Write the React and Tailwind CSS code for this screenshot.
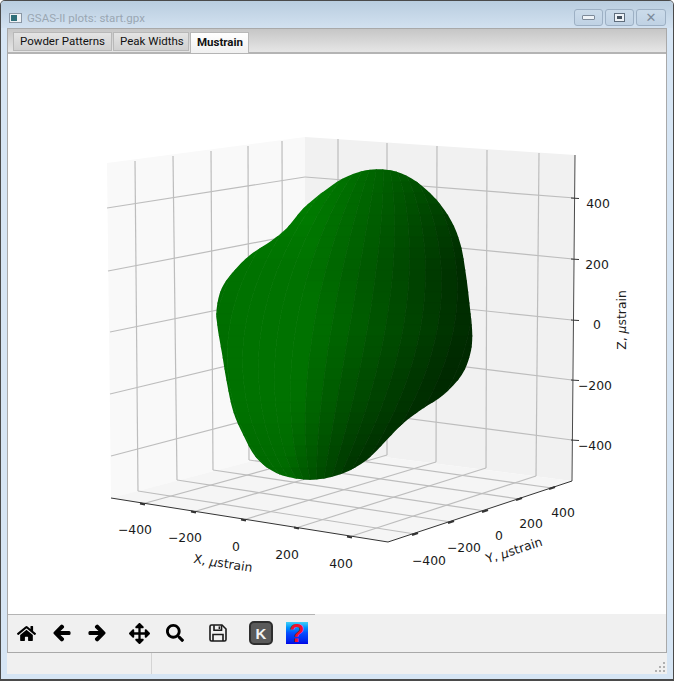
import { FaHome, FaArrowLeft, FaArrowRight, FaArrowsAlt, FaSearch } from "react-icons/fa";

const outline = [
  [500, 13], [560, 20], [620, 50], [680, 105], [725, 170], [752, 240], [768, 330], [780, 430], [787, 510],
  [780, 570], [755, 630], [700, 690], [640, 730], [580, 775], [530, 825], [470, 885], [400, 925], [330, 942],
  [270, 942], [200, 925], [140, 880], [100, 810], [70, 740], [50, 650], [35, 560], [22, 480], [20, 430],
  [35, 370], [70, 320], [120, 270], [180, 230], [230, 190], [280, 130], [340, 80], [400, 40], [450, 20],
].map(([x, y]) => [+(210 + x / 3).toFixed(1), +(165 + y / 3).toFixed(1)]);

// closed catmull-rom through the outline points
function blobPath(pts) {
  const n = pts.length;
  let d = `M${pts[0][0]} ${pts[0][1]}`;
  for (let i = 0; i < n; i++) {
    const p0 = pts[(i - 1 + n) % n];
    const p1 = pts[i];
    const p2 = pts[(i + 1) % n];
    const p3 = pts[(i + 2) % n];
    const c1x = p1[0] + (p2[0] - p0[0]) / 6;
    const c1y = p1[1] + (p2[1] - p0[1]) / 6;
    const c2x = p2[0] - (p3[0] - p1[0]) / 6;
    const c2y = p2[1] - (p3[1] - p1[1]) / 6;
    d += `C${c1x.toFixed(1)} ${c1y.toFixed(1)} ${c2x.toFixed(1)} ${c2y.toFixed(1)} ${p2[0]} ${p2[1]}`;
  }
  return d + "Z";
}

// longitude/latitude mesh that gets clipped by the outline
function meshPoint(col, row, cols, rows) {
  const t = row / rows;
  const theta = (col / cols - 0.5) * Math.PI;
  const cx = 378 + (322 - 378) * t;
  const w = 40 + 190 * Math.pow(Math.sin(Math.PI * t), 0.6);
  return [cx + Math.sin(theta) * w, 160 + 330 * t];
}

function shade(x, y) {
  const lowerRight = Math.min(1, Math.max(0, (x - 260) / 90));
  const s = x + 0.55 * Math.max(0, y - 330) * lowerRight;
  let g = 114 - Math.max(0, s - 310) * 0.45;
  g += Math.max(0, 270 - y) * 0.16;
  g -= Math.max(0, y - 400) * 0.12;
  g -= Math.max(0, 240 - x) * 0.2;
  return Math.max(42, Math.round(g));
}

function buildMesh() {
  const cols = 40;
  const rows = 30;
  const cells = [];
  for (let c = 0; c < cols; c++) {
    for (let r = 0; r < rows; r++) {
      const a = meshPoint(c, r, cols, rows);
      const b = meshPoint(c + 1, r, cols, rows);
      const e = meshPoint(c + 1, r + 1, cols, rows);
      const f = meshPoint(c, r + 1, cols, rows);
      const mx = (a[0] + b[0] + e[0] + f[0]) / 4;
      const my = (a[1] + b[1] + e[1] + f[1]) / 4;
      cells.push({
        key: `${c}-${r}`,
        points: [a, b, e, f].map((p) => p.map((v) => v.toFixed(1)).join(",")).join(" "),
        color: `rgb(0,${shade(mx, my)},0)`,
      });
    }
  }
  return cells;
}

const meshCells = buildMesh();

const leftV = [[135, 161, 138, 491], [173, 156, 177, 480], [211, 151, 213, 470], [248, 146, 249, 460], [282, 141, 283, 450]];
const rightV = [[338, 139, 338, 450], [387, 143, 387, 455], [437, 146, 436, 462], [487, 150, 486, 468], [539, 153, 536, 476]];
const leftH = [[107, 208, 305, 177], [108, 271, 305, 233], [110, 332, 305, 292], [110, 394, 305, 347], [111, 456, 305, 405]];
const rightH = [[305, 177, 575, 198], [305, 233, 573, 259], [305, 292, 572, 320], [305, 347, 572, 380], [305, 405, 572, 440]];
const floorX = [[142, 504, 338, 450], [193, 512, 387, 455], [243, 520, 436, 462], [296, 528, 486, 468], [349, 537, 536, 476]];
const floorY = [[415, 534, 138, 491], [451, 522, 177, 480], [485, 511, 213, 470], [519, 499, 249, 460], [552, 488, 283, 450]];
const zTicks = [[198, "400", 598, 203], [259, "200", 597, 264], [320, "0", 597, 324], [380, "−200", 595, 385], [440, "−400", 595, 445]];
const xLabels = [["−400", 135, 529], ["−200", 185, 537], ["0", 236, 546], ["200", 287, 554], ["400", 341, 563]];
const yLabels = [["−400", 429, 560], ["−200", 464, 547], ["0", 499, 535], ["200", 531, 523], ["400", 563, 512]];

function Lines({ data }) {
  return data.map((l, i) => (
    <line key={i} x1={l[0]} y1={l[1]} x2={l[2]} y2={l[3]} stroke="#bdbdbd" strokeWidth="1.2" />
  ));
}

function AxisLabel({ x, y, rotate, children }) {
  return (
    <text x={x} y={y} textAnchor="middle" dominantBaseline="central" fontSize="12.4" fill="#1a1a1a" transform={`rotate(${rotate} ${x} ${y})`}>
      {children}
    </text>
  );
}

function Plot() {
  return (
    <svg viewBox="8 54 658 560" className="w-[658px] h-[560px] block font-['DejaVu_Sans',sans-serif]">
      <rect x="8" y="54" width="658" height="560" fill="#ffffff" />
      <polygon points="107,163 305,137 305,447 111,498" fill="#f9f9f9" />
      <polygon points="305,137 575,155 572,481 305,447" fill="#f1f1f1" />
      <polygon points="111,498 305,447 572,481 388,542" fill="#f5f5f5" />
      <Lines data={leftV} />
      <Lines data={rightV} />
      <Lines data={leftH} />
      <Lines data={rightH} />
      <Lines data={floorX} />
      <Lines data={floorY} />

      <line x1="575" y1="155" x2="572" y2="481" stroke="#4a4a4a" strokeWidth="1" />
      <line x1="111" y1="498" x2="388" y2="542" stroke="#333333" strokeWidth="1" />
      <line x1="388" y1="542" x2="572" y2="481" stroke="#333333" strokeWidth="1" />
      {zTicks.map(([y, label, tx, ty]) => (
        <g key={label}>
          <line x1="571" y1={y} x2="579" y2={y + 0.5} stroke="#333333" strokeWidth="1" />
          <AxisLabel x={tx} y={ty} rotate={0}>{label}</AxisLabel>
        </g>
      ))}
      {floorX.map((l, i) => (
        <line key={i} x1={l[0] - 2} y1={l[1] - 0.4} x2={l[0] + 3} y2={l[1] + 0.5} stroke="#333333" strokeWidth="2" />
      ))}
      {floorY.map((l, i) => (
        <line key={i} x1={l[0] - 3} y1={l[1] + 1} x2={l[0] + 3} y2={l[1] - 1} stroke="#333333" strokeWidth="2" />
      ))}
      {xLabels.map(([t, x, y]) => <AxisLabel key={t} x={x} y={y} rotate={0}>{t}</AxisLabel>)}
      {yLabels.map(([t, x, y]) => <AxisLabel key={t} x={x} y={y} rotate={0}>{t}</AxisLabel>)}
      <AxisLabel x={223} y={563} rotate={9}>X, <tspan fontStyle="italic">μ</tspan>strain</AxisLabel>
      <AxisLabel x={514} y={550} rotate={-18}>Y, <tspan fontStyle="italic">μ</tspan>strain</AxisLabel>
      <AxisLabel x={621} y={320} rotate={-90}>Z, <tspan fontStyle="italic">μ</tspan>strain</AxisLabel>

      <clipPath id="blob">
        <path d={blobPath(outline)} />
      </clipPath>
      <g clipPath="url(#blob)">
        {meshCells.map((c) => (
          <polygon key={c.key} points={c.points} fill={c.color} stroke={c.color} strokeWidth="0.7" />
        ))}
      </g>
    </svg>
  );
}

function WinButton({ children, className }) {
  return (
    <div className={`h-[17px] flex items-center justify-center rounded-[3px] border border-[#9db0c4] bg-gradient-to-b from-[#cbdbea] to-[#c0d2e4] ${className}`}>
      {children}
    </div>
  );
}

function SaveIcon() {
  return (
    <svg viewBox="0 0 18 18" className="ml-[25px] w-[18px] h-[18px]" fill="none" stroke="#1a1a1a" strokeWidth="1.6">
      <path d="M2.5 1h10.5l4 4v10.5a1.5 1.5 0 0 1-1.5 1.5h-13a1.5 1.5 0 0 1-1.5-1.5v-13a1.5 1.5 0 0 1 1.5-1.5z" />
      <path d="M5 1.2v5h7.5v-5" />
      <path d="M4 17v-6.5h10v6.5" />
      <rect x="9.6" y="2.4" width="1.4" height="2.6" fill="#1a1a1a" stroke="none" />
    </svg>
  );
}

function KeyIcon() {
  return (
    <div className="w-6 h-6 rounded-[5px] bg-[#5a5a5a] border-2 border-[#2e2e2e] flex items-center justify-center">
      <span className="text-[#f2f2f2] text-[15px] font-bold leading-none font-['Liberation_Sans',sans-serif]">K</span>
    </div>
  );
}

function HelpIcon() {
  return (
    <div className="w-[22px] h-[22px] bg-gradient-to-b from-[#3fd0f5] via-[#0a4cff] to-[#0000e6] flex items-center justify-center">
      <span className="text-[#f0102a] text-[25px] font-bold leading-none font-['Liberation_Sans',sans-serif]">?</span>
    </div>
  );
}

export default function App() {
  return (
    <div className="w-[674px] h-[681px] flex flex-col overflow-hidden border-t border-x border-[#4a4a4a] border-b-2 rounded-t-[5px] bg-[#d6e5f4] font-['Roboto',sans-serif]">
      {/* title bar */}
      <div className="h-[27px] shrink-0 flex items-start bg-gradient-to-b from-[#b9cddf] to-[#d2e1f0] pl-[8px] pr-[7px]">
        <div className="mt-[12px] w-[13px] h-[10px] border border-[#8a97a5] bg-[#eef2f5] flex items-start p-[1px]">
          <div className="w-[6px] h-[6px] bg-[#2f6f7a]" />
        </div>
        <span className="ml-[5px] mt-[9px] text-[11.5px] leading-[16px] text-[#9aa7b3]">GSAS-II plots: start.gpx</span>
        <div className="ml-auto mt-[8px] flex gap-[2px]">
          <WinButton className="w-[29px]"><div className="w-[13px] h-[5px] rounded-[1px] bg-[#eef3f8] border border-[#7d8a99]" /></WinButton>
          <WinButton className="w-[29px]"><div className="w-[11px] h-[9px] bg-[#eef3f8] border border-[#5f6d7c] flex items-center justify-center"><div className="w-[5px] h-[3px] bg-[#46525f]" /></div></WinButton>
          <WinButton className="w-[30px]"><span className="text-[#7c8a9a] text-[13px] leading-none font-bold font-['DejaVu_Sans',sans-serif]">✕</span></WinButton>
        </div>
      </div>

      <div className="mx-[6px] flex-1 flex flex-col min-h-0 border-x border-t border-[#a9a9a9] bg-[#f0f0f0]">
        {/* tabs */}
        <div className="h-[25px] shrink-0 flex items-start pl-[5px] pt-[3px] gap-[1px] bg-gradient-to-b from-[#c6c6c6] to-[#e6e6e6] border-b-[2px] border-[#b4b4b4] text-[11.5px] text-[#111111]">
          <div className="w-[99px] h-[19px] flex items-center pl-[6px] border border-[#b8b8b8] bg-gradient-to-b from-[#e4e4e4] to-[#d0d0d0]">Powder Patterns</div>
          <div className="w-[76px] h-[19px] flex items-center pl-[6px] border border-[#b8b8b8] bg-gradient-to-b from-[#e4e4e4] to-[#d0d0d0]">Peak Widths</div>
          <div className="w-[59px] h-[21px] flex items-center pl-[6px] border border-b-0 border-[#b8b8b8] bg-gradient-to-b from-white to-[#f0f0f0] font-bold">Mustrain</div>
        </div>
        <Plot />
        {/* matplotlib toolbar */}
        <div className="h-[38px] shrink-0 relative flex items-center pl-[9px] bg-[#f0f0f0]">
          <div className="absolute left-0 top-0 w-[307px] h-px bg-[#b4b4b4]" />
          <FaHome className="w-[19px] h-[19px] text-black" />
          <FaArrowLeft className="ml-[17px] w-[18px] h-[18px] text-black" stroke="black" strokeWidth={40} />
          <FaArrowRight className="ml-[17px] w-[18px] h-[18px] text-black" stroke="black" strokeWidth={40} />
          <FaArrowsAlt className="ml-[23px] w-[21px] h-[21px] text-black" />
          <FaSearch className="ml-[16px] w-[18px] h-[18px] text-black" />
          <SaveIcon />
          <div className="ml-[22px]"><KeyIcon /></div>
          <div className="ml-[13px]"><HelpIcon /></div>
        </div>
      </div>

      {/* status bar */}
      <div className="mx-[6px] mb-[5px] h-[22px] shrink-0 relative flex border-t border-[#a9a9a9] bg-[#f0f0f0]">
        <div className="w-[145px] border-r border-[#d4d4d4]" />
        <svg viewBox="0 0 11 11" className="absolute right-[1px] bottom-[1px] w-[11px] h-[11px]" fill="#b0b0b0">
          <rect x="8" y="0" width="2" height="2" />
          <rect x="4" y="4" width="2" height="2" />
          <rect x="8" y="4" width="2" height="2" />
          <rect x="0" y="8" width="2" height="2" />
          <rect x="4" y="8" width="2" height="2" />
          <rect x="8" y="8" width="2" height="2" />
        </svg>
      </div>
    </div>
  );
}
